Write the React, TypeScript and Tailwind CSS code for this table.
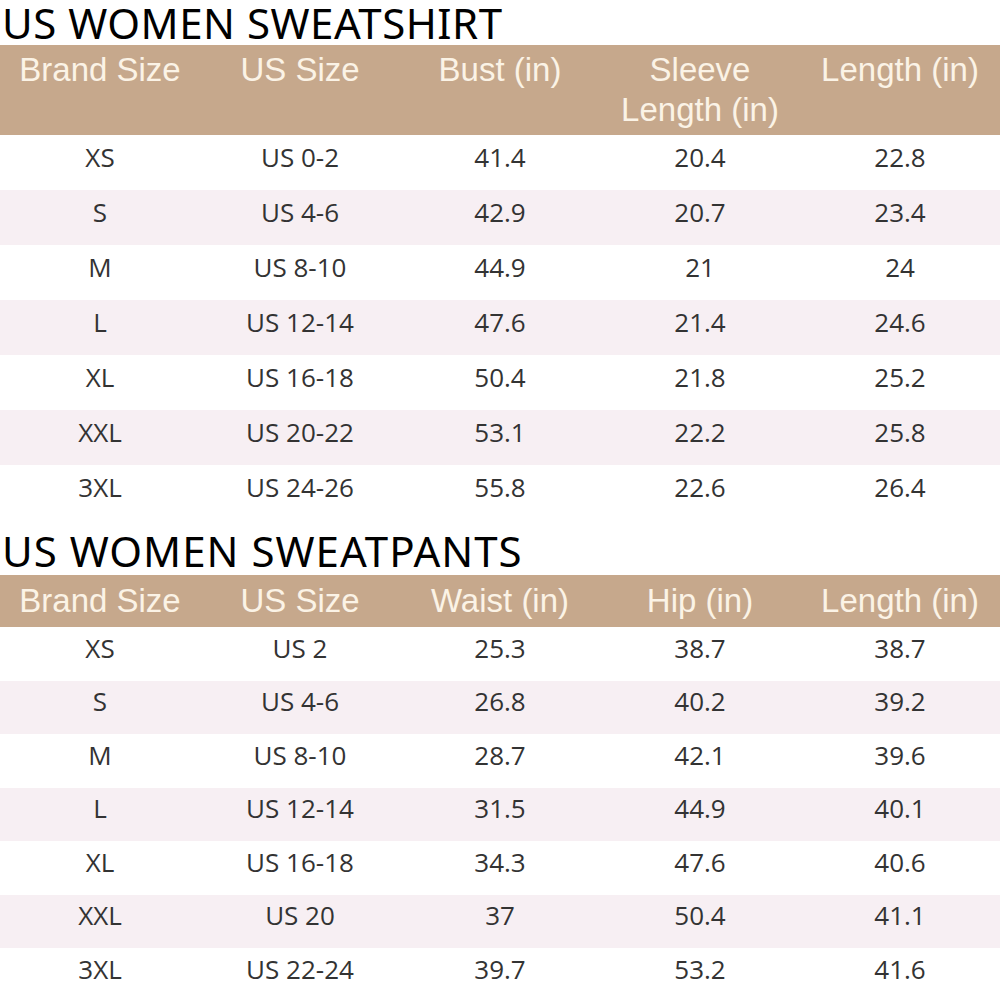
const shirtRows = [
  ['XS', 'US 0-2', '41.4', '20.4', '22.8'],
  ['S', 'US 4-6', '42.9', '20.7', '23.4'],
  ['M', 'US 8-10', '44.9', '21', '24'],
  ['L', 'US 12-14', '47.6', '21.4', '24.6'],
  ['XL', 'US 16-18', '50.4', '21.8', '25.2'],
  ['XXL', 'US 20-22', '53.1', '22.2', '25.8'],
  ['3XL', 'US 24-26', '55.8', '22.6', '26.4'],
]

const pantsRows = [
  ['XS', 'US 2', '25.3', '38.7', '38.7'],
  ['S', 'US 4-6', '26.8', '40.2', '39.2'],
  ['M', 'US 8-10', '28.7', '42.1', '39.6'],
  ['L', 'US 12-14', '31.5', '44.9', '40.1'],
  ['XL', 'US 16-18', '34.3', '47.6', '40.6'],
  ['XXL', 'US 20', '37', '50.4', '41.1'],
  ['3XL', 'US 22-24', '39.7', '53.2', '41.6'],
]

const Title = ({ text, className }: { text: string; className: string }) => (
  <div
    className={`text-[42px] text-black pl-[2px] ${className}`}
    style={{ fontFamily: '"Noto Sans", sans-serif' }}
  >
    {text}
  </div>
)

const SizeTable = ({
  headers,
  rows,
  headClass,
  rowClass,
}: {
  headers: string[]
  rows: string[][]
  headClass: string
  rowClass: string
}) => (
  <div>
    <div
      className={`grid grid-cols-5 bg-[#c6a88c] text-[#fbf3e6] text-[33px] leading-[40px] ${headClass}`}
      style={{ fontFamily: '"Liberation Sans", Arial, sans-serif' }}
    >
      {headers.map((h, i) => (
        <div key={i} className="text-center">
          {h.split('\n').map((line, j) => (
            <div key={j}>{line}</div>
          ))}
        </div>
      ))}
    </div>
    {rows.map((r, idx) => (
      <div
        key={idx}
        className={`grid grid-cols-5 items-center text-[26px] text-[#333333] pb-[11px] ${rowClass} ${idx % 2 === 1 ? 'bg-[#f7eff3]' : 'bg-white'}`}
        style={{ fontFamily: '"Open Sans", sans-serif' }}
      >
        {r.map((c, i) => (
          <div key={i} className="text-center">{c}</div>
        ))}
      </div>
    ))}
  </div>
)

export default function App() {
  return (
    <div className="w-[1000px] h-[1000px] bg-white overflow-hidden">
      <Title text="US WOMEN SWEATSHIRT" className="h-[45px] leading-[46px] tracking-[0.5px]" />
      <SizeTable
        headers={['Brand Size', 'US Size', 'Bust (in)', 'Sleeve\nLength (in)', 'Length (in)']}
        rows={shirtRows}
        headClass="h-[90px] pt-[5px]"
        rowClass="h-[55px]"
      />
      <Title text="US WOMEN SWEATPANTS" className="h-[55px] pt-[7px] leading-[48px] tracking-[1px]" />
      <SizeTable
        headers={['Brand Size', 'US Size', 'Waist (in)', 'Hip (in)', 'Length (in)']}
        rows={pantsRows}
        headClass="h-[52px] pt-[6px]"
        rowClass="h-[53.5px]"
      />
    </div>
  )
}
